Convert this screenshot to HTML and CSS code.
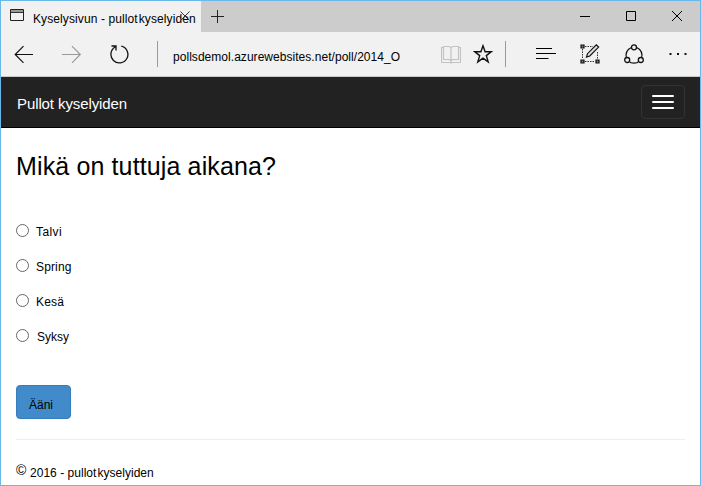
FILE: index.html
```html
<!DOCTYPE html>
<html lang="fi">
<head>
<meta charset="utf-8">
<title>Kyselysivun - pullot kyselyiden</title>
<link rel="stylesheet" href="styles.css">
</head>
<body>
<div class="window">
  <header class="titlebar">
    <div class="tab">
      <svg class="tab-icon" width="14" height="12" viewBox="0 0 14 12"><path d="M.5.5h13v11H.5z" fill="#f1f1f1" stroke="#222"/><path d="M1 2h12" stroke="#999" stroke-width="2"/><path d="M1 3.500h12" stroke="#333"/></svg>
      <span class="tab-title">Kyselysivun - pullot<i class="thin"></i>kyselyiden</span>
      <svg class="tab-close" width="10" height="10" viewBox="0 0 10 10"><path d="M.5.5l9 9M9.500.5l-9 9" stroke="#333" fill="none"/></svg>
    </div>
    <svg class="new-tab" width="13" height="13" viewBox="0 0 13 13"><path d="M6.500 0v13M0 6.500h13" stroke="#222"/></svg>
    <div class="controls">
      <svg width="10" height="10" viewBox="0 0 10 10"><path d="M0 5.500h10" stroke="#000"/></svg>
      <svg width="10" height="10" viewBox="0 0 10 10"><path d="M.5.5h9v9h-9z" fill="none" stroke="#000"/></svg>
      <svg width="10" height="10" viewBox="0 0 10 10"><path d="M0 0l10 10M10 0L0 10" stroke="#000"/></svg>
    </div>
  </header>
  <div class="toolbar">
    <svg class="back" width="20" height="18" viewBox="0 0 20 18"><path d="M19 9.500H1M9.500 1.200L1.200 9.500l8.300 8.300" fill="none" stroke="#111" stroke-width="1.200"/></svg>
    <svg class="forward" width="20" height="18" viewBox="0 0 20 18"><path d="M0 9.500h18.500M10 1.200l8.300 8.300-8.300 8.300" fill="none" stroke="#999" stroke-width="1.200"/></svg>
    <svg class="reload" width="20" height="20" viewBox="0 0 20 20"><path d="M12.300 2.100A8.500 8.500 0 1 1 6.200 3M2.500 2H7v4.500" fill="none" stroke="#111" stroke-width="1.300"/></svg>
    <span class="divider"></span>
    <span class="address">pollsdemol.azurewebsites.net/poll/2014_O</span>
    <svg class="book" width="20" height="19" viewBox="0 0 20 19"><path d="M2.500 1.500H8l2 1 2-1h5.500v13H12l-2 1-2-1H2.500zM10 2v16M2.500 2.500h-2v15H8l2 .5 2-.5h7.500v-15h-2" fill="none" stroke="#c3c3c3" stroke-width="1.200"/></svg>
    <svg class="star" width="20" height="20" viewBox="0 0 20 20"><path d="M10 1.800l2.100 6h6.100l-4.900 3.800 1.900 6.300L10 14.200l-5.200 3.700 1.900-6.300-4.900-3.800h6.100z" fill="none" stroke="#111" stroke-width="1.400"/></svg>
    <span class="divider divider-end"></span>
    <svg class="lines" width="20" height="12" viewBox="0 0 20 12"><path d="M0 .5h16M0 5.500h20M0 10.500h12.500" stroke="#000"/></svg>
    <svg class="note" width="20" height="20" viewBox="0 0 20 20"><path d="M5 2.500h8M2.500 5v10M5 17.500h10M17.500 8v7" fill="none" stroke="#333" stroke-dasharray="1.500 1"/><path d="M1 1h3v3H1zM1 16h3v3H1zM16 16h3v3h-3z" fill="#777" stroke="#111" stroke-width="1.200"/><path d="M6.500 13l1-3.300L16.300.8l2.300 2.300-8.800 8.900z" fill="#ddd" stroke="#111" stroke-width="1.200"/></svg>
    <svg class="share" width="20" height="20" viewBox="0 0 20 20"><circle cx="10" cy="11.200" r="8" fill="none" stroke="#111" stroke-width="1.200"/><g fill="#f1f1f1" stroke="#111" stroke-width="1.300"><circle cx="10" cy="3.300" r="2.500"/><circle cx="3.200" cy="16" r="2.500"/><circle cx="16.800" cy="16" r="2.500"/></g></svg>
    <svg class="more" width="18" height="4" viewBox="0 0 18 4"><path d="M.5 1h2v2h-2zM8 1h2v2H8zM15.500 1h2v2h-2z" fill="#111"/></svg>
  </div>
  <nav class="navbar">
    <span class="brand">Pullot kyselyiden</span>
    <span class="toggle"><i></i><i></i><i></i></span>
  </nav>
  <main class="page">
    <h1>Mikä on tuttuja aikana?</h1>
    <form class="poll">
      <label><input type="radio" name="season"><span class="talvi">Talvi</span></label>
      <label><input type="radio" name="season"><span>Spring</span></label>
      <label><input type="radio" name="season"><span>Kesä</span></label>
      <label><input type="radio" name="season"><span class="syksy">Syksy</span></label>
      <button type="button">Ääni</button>
    </form>
    <footer><span class="copy">©</span><span class="foot-text">2016 - pullot<i class="thin"></i>kyselyiden</span></footer>
  </main>
</div>
</body>
</html>
```
FILE: styles.css
```css
* { box-sizing: border-box; }
body { margin: 0; font: 12px/16px "Liberation Sans", Arial, sans-serif; color: #000; background: #fff; }
svg { display: block; flex: none; }
.window { width: 701px; height: 486px; border: 1px solid #6ab7e9; overflow: hidden; display: flex; flex-direction: column; }
.titlebar { height: 31px; flex: none; background: #ccc; display: flex; align-items: flex-start; }
.tab { position: relative; width: 200px; height: 31px; background: #f1f1f1; display: flex; padding-left: 9px; }
.tab-icon { margin-top: 8px; }
.tab-title { margin: 10px 0 0 9px; white-space: nowrap; letter-spacing: .1px; }
.thin { display: inline-block; width: 1px; }
.tab-close { position: absolute; left: 179px; top: 10px; }
.new-tab { margin: 9px 0 0 10px; }
.controls { display: flex; gap: 36px; margin: 10px 18px 0 auto; }
.toolbar { height: 45px; flex: none; background: #f1f1f1; border-bottom: 1px solid #c8c8c8; display: flex; align-items: center; padding-left: 13px; }
.forward { margin-left: 28px; }
.reload { margin-left: 27px; }
.divider { width: 1px; height: 26px; background: #999; margin-left: 28px; }
.address { width: 228px; margin: 5px 0 0 15px; white-space: nowrap; letter-spacing: .04px; }
.book { margin-left: 40px; }
.star { margin-left: 12px; }
.divider-end { margin-left: 12px; }
.lines { margin-left: 30px; }
.note { margin-left: 24px; }
.share { margin-left: 24px; }
.more { margin-left: 25px; }
.navbar { height: 51px; flex: none; background: #222; border-bottom: 1px solid #000; color: #fff; display: flex; justify-content: space-between; align-items: flex-start; padding: 8px 15px 0 16px; }
.brand { font-size: 15px; line-height: 20px; margin-top: 9px; letter-spacing: -.1px; }
.toggle { width: 44px; height: 34px; border: 1px solid #333; border-radius: 4px; padding: 9px 10px; display: flex; flex-direction: column; gap: 4px; }
.toggle i { height: 2px; background: #fff; border-radius: 1px; }
.page { padding: 0 15px; }
h1 { margin: 22px 0 0; font-size: 25px; line-height: 32px; font-weight: 400; letter-spacing: .13px; white-space: nowrap; }
.poll { display: flex; flex-direction: column; align-items: flex-start; padding-top: 38px; }
label { display: flex; height: 35px; align-items: flex-start; }
input { appearance: none; width: 13px; height: 13px; border: 1px solid #666; border-radius: 50%; margin: 4px 7px 0 0; background: #fff; }
label span { margin-top: 4px; letter-spacing: .15px; }
.talvi { letter-spacing: .4px; }
.syksy { margin-left: 1px; letter-spacing: 0; }
button { width: 55px; height: 34px; margin-top: 25px; padding: 6px 0 0 12px; border: 1px solid #357ebd; border-radius: 4px; background: #428bca; color: #000; font: inherit; text-align: left; }
footer { border-top: 1px solid #eee; margin-top: 20px; padding-top: 23px; display: flex; white-space: nowrap; }
.copy { font-size: 14px; line-height: 15px; width: 14px; }
.foot-text { margin-top: 2px; letter-spacing: .03px; }
```
